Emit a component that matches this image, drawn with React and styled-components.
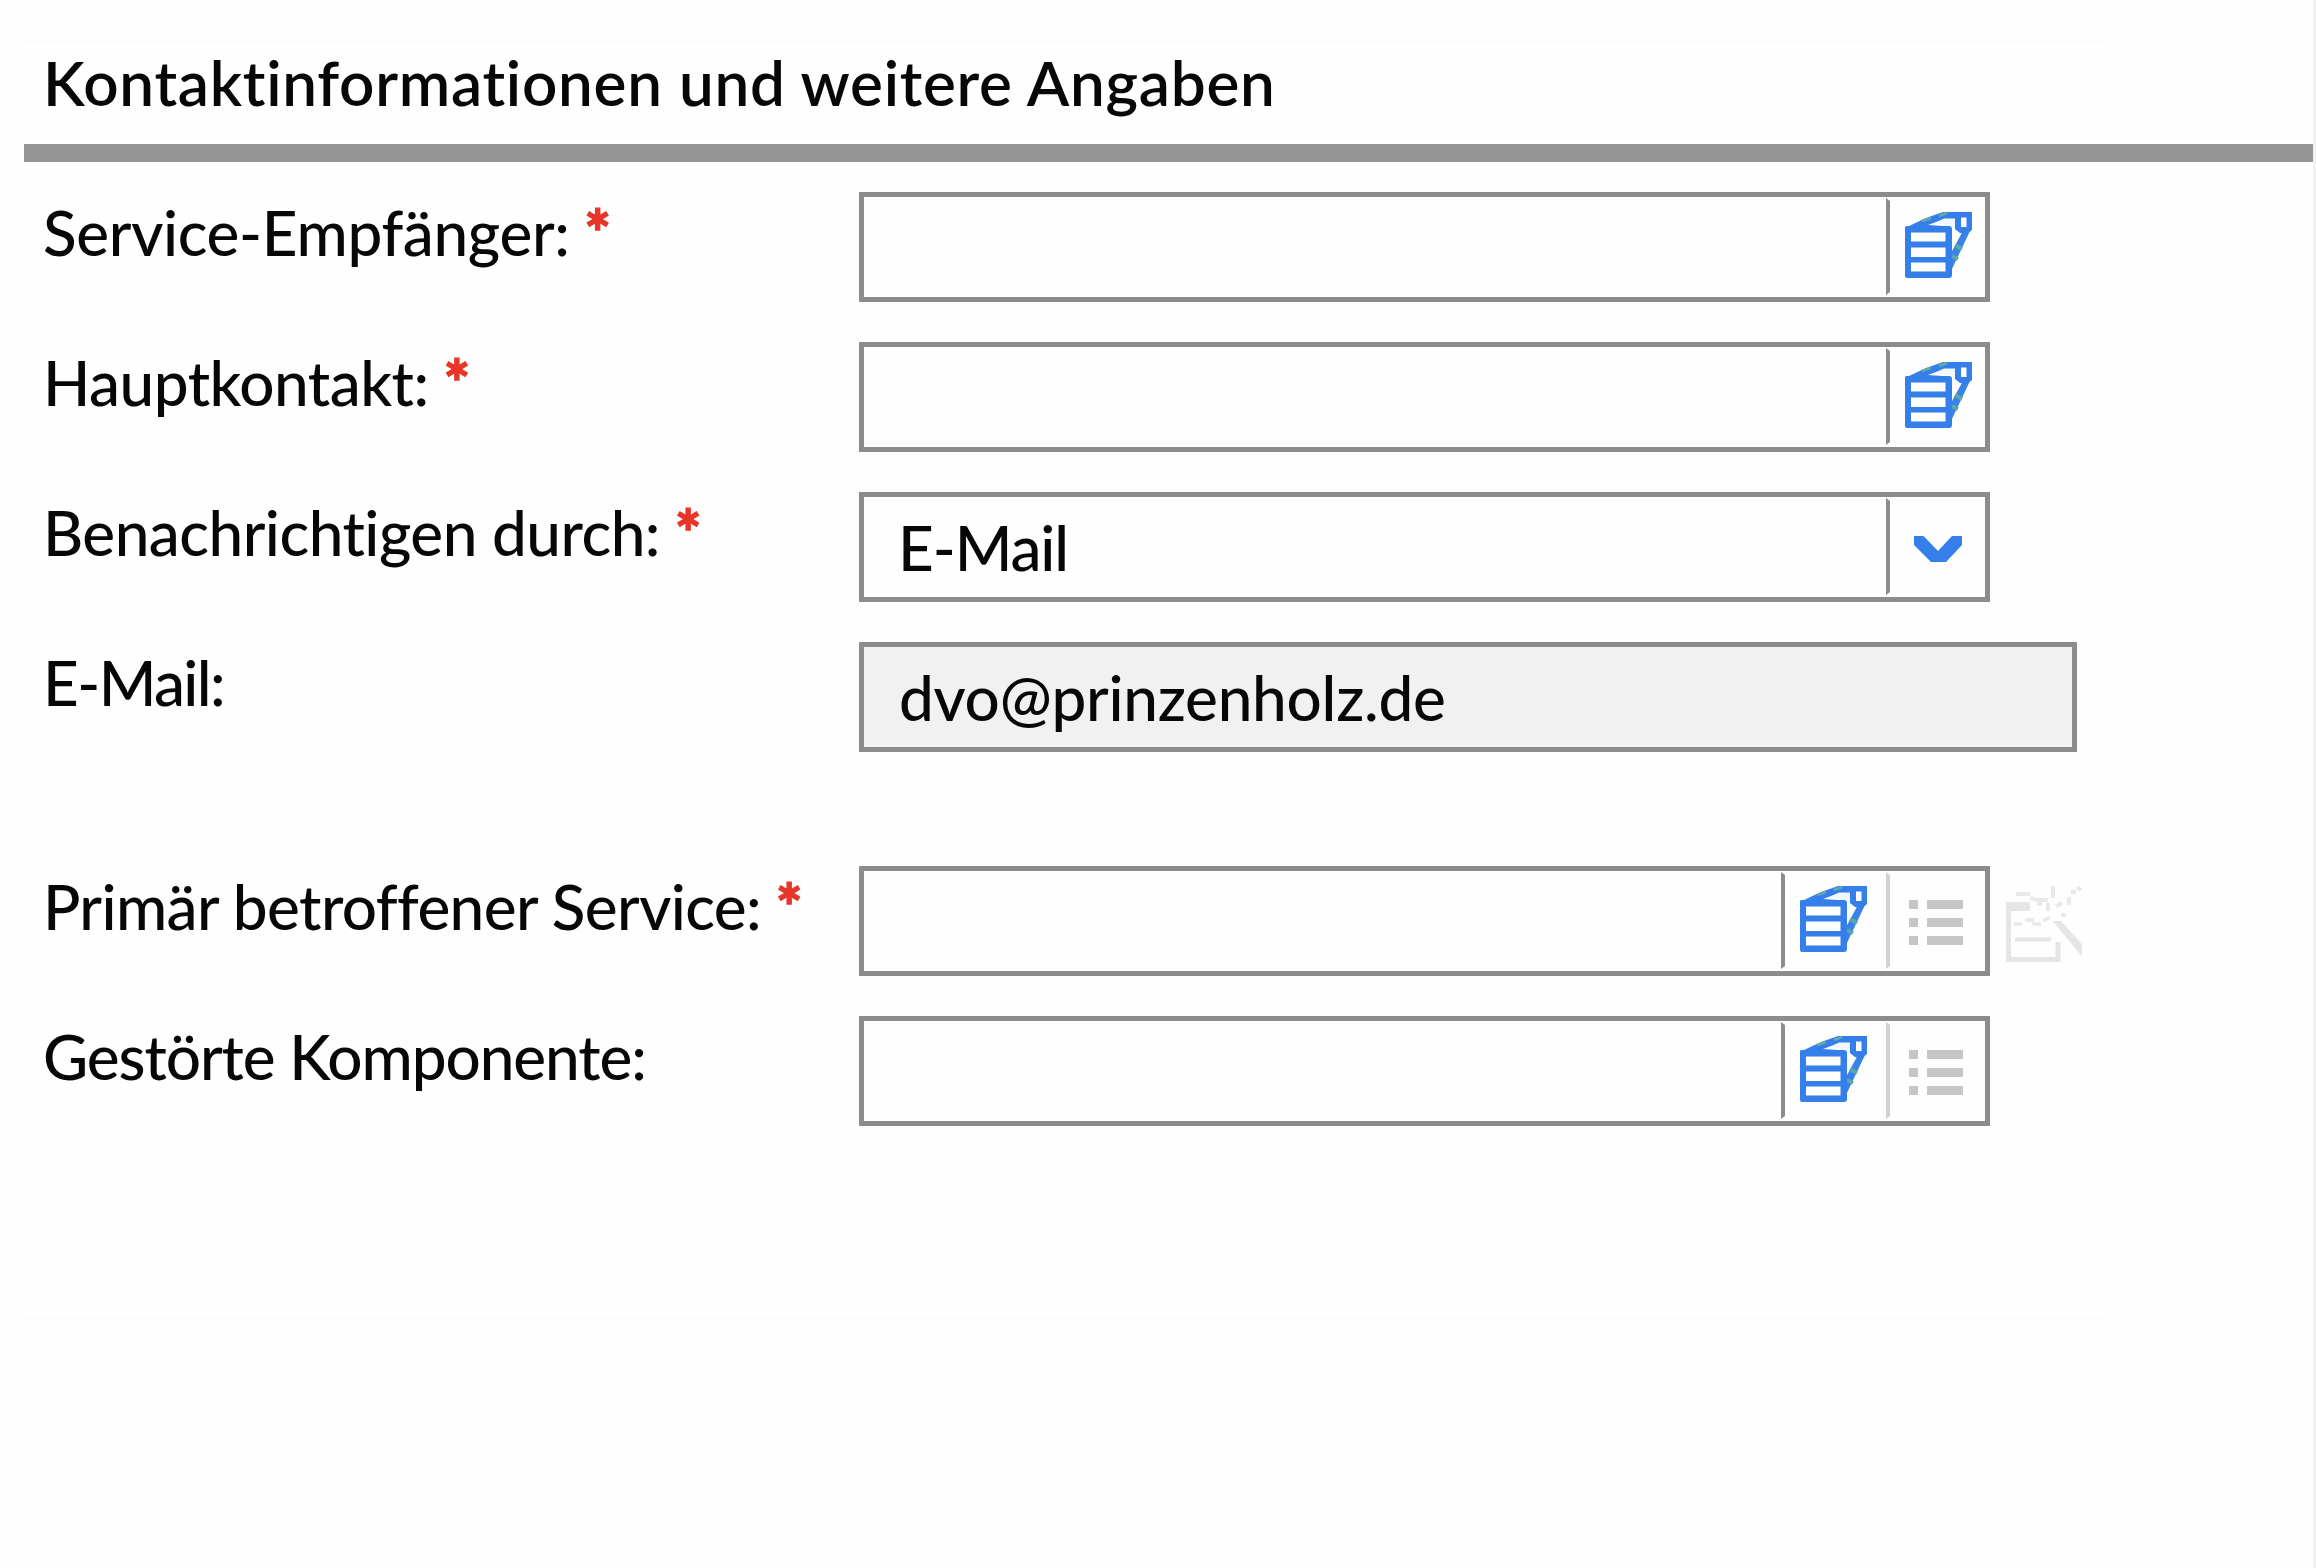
import React from 'react';
import styled, { createGlobalStyle } from 'styled-components';

const GlobalStyle = createGlobalStyle`
  *, *::before, *::after { box-sizing: border-box; }
  body {
    margin: 0;
    background: #fefefe;
    color: #060808;
    font-family: Lato, "Open Sans", sans-serif;
  }
`;

const Page = styled.main`
  width: 2316px;
  height: 1568px;
  padding: 41px 0 0 24px;
  border-right: 3px solid #f1f1f1;
  overflow: hidden;
`;

const Panel = styled.section`
  display: flex;
  flex-direction: column;
  width: 2080px;
  height: 1278px;
  border: 2px solid #fbfbfb;
  border-left: 0;
  border-right: 1px solid #fcfcfc;
`;

const Title = styled.h1`
  flex: none;
  height: 101px;
  margin: 0;
  padding: 2px 0 0 19px;
  font-size: 62px;
  font-weight: 600;
  line-height: 74px;
  letter-spacing: 0.73px;
  white-space: nowrap;
`;

const Rule = styled.div`
  flex: none;
  width: 2289px;
  height: 18px;
  background: #959595;
`;

const Form = styled.form`
  display: flex;
  flex-direction: column;
  gap: 40px;
  padding-top: 30px;
`;

const Row = styled.div`
  display: grid;
  grid-template-columns: 835px auto auto 1fr;
  height: 110px;
  margin-top: ${(p) => (p.$spaced ? '74px' : '0')};
`;

const Label = styled.label`
  padding: 3px 0 0 19px;
  font-size: 62px;
  font-weight: 500;
  line-height: 74px;
  letter-spacing: ${(p) => p.$tracking}px;
  white-space: nowrap;
`;

const Required = styled.span`
  margin-left: 15px;
  color: #e8352a;
  font-weight: 900;
  -webkit-text-stroke: 1.4px #e8352a;
`;

const Field = styled.div`
  display: flex;
  width: ${(p) => (p.$readOnly ? '1218px' : '1131px')};
  height: 110px;
  border: 5px solid #8c8c8c;
  background: ${(p) => (p.$readOnly ? '#f1f1f1' : '#fefefe')};
`;

const Value = styled.span`
  flex: 1;
  padding: 13px 0 0 ${(p) => p.$indent}px;
  font-size: 62px;
  font-weight: 500;
  line-height: 74px;
  letter-spacing: ${(p) => p.$tracking}px;
  white-space: nowrap;
`;

const Tool = styled.span`
  display: flex;
  align-items: flex-start;
  width: ${(p) => (p.$wide ? '105px' : '99px')};
  height: 97px;
  margin-top: 1px;
  border: solid transparent;
  border-width: 3px 0 3px 4px;
  border-left-color: ${(p) => (p.$muted ? '#d2d2d2' : '#8c8c8c')};

  svg { display: block; margin: 10px 0 0 15px; }
`;

const SideAction = styled.span`
  padding: 19px 0 0 16px;
  svg { display: block; }
`;

const RecordsIcon = () => (
  <svg width="68" height="68" viewBox="0 0 68 68" fill="none">
    <path d="M46 60L65 20L59 18L46 42Z" fill="#3982e8" />
    <path d="M50 34l7 4M47 45l6 3" stroke="#5aa8a8" strokeWidth="4" />
    <path d="M4 15L21 7L38 1H67V19L62 23L55 22L50 18V8H39L23 14L45 15.5" fill="#347fe9" />
    <path d="M17 10l9-3M34 5l8-3" stroke="#62aaa7" strokeWidth="2.5" />
    <path d="M30 12L39 7.500H50V17L46 15Z" fill="#f1f7fd" />
    <path d="M56 6.500H61.500V16H56Z" fill="#fefefe" />
    <path
      fillRule="evenodd"
      d="M0 16Q0 15 2 15H44Q47 15 47 18V64Q47 67 44 67H2Q0 67 0 65ZM6 21.500V30.500H40.500V21.500ZM6 36.500V46H40.500V36.500ZM6 51.500V60.500H40.500V51.500Z"
      fill="#347fe9"
    />
  </svg>
);

const ChevronIcon = () => (
  <svg width="68" height="68" viewBox="0 0 68 68">
    <path d="M9 25H18.500L33 40L47 25H57V34L41 51H26L9 34Z" fill="#347fe9" />
  </svg>
);

const ListIcon = () => (
  <svg width="68" height="68" viewBox="0 0 68 68" fill="#c6c6c6">
    <path d="M4 15h9v9H4zM22 15h36v9H22zM4 33h9v9H4zM22 33h36v9H22zM4 51h9v9H4zM22 51h36v9H22z" />
  </svg>
);

const MagicFormIcon = () => (
  <svg width="80" height="80" viewBox="0 0 80 80" fill="none" stroke="#e5e5e5">
    <path d="M2.500 17V74.500H52V57" strokeWidth="5" />
    <path d="M0 21.500H24" strokeWidth="9" />
    <path d="M9 54.500H45" strokeWidth="4" />
    <path d="M8 39H16M19 35H28M26 39H35M37 36L44 32" stroke="#e9e9e9" strokeWidth="3.5" />
    <path d="M10 9H24M24 13L31 15H42M42 18V26M31 19H36" stroke="#e9e9e9" strokeWidth="4" />
    <path d="M47 1V13M50 21L56 18M63 12V20M55 30H60M65 7H70M71 2L75 5" stroke="#e9e9e9" strokeWidth="4" />
    <path d="M51 38L74 66L74 60L54 38Z" fill="#e5e5e5" strokeWidth="4" />
  </svg>
);

const fields = [
  { id: 'recipient', label: 'Service-Empfänger:', tracking: -0.32, required: true, tools: ['records'] },
  { id: 'contact', label: 'Hauptkontakt:', tracking: -0.5, required: true, tools: ['records'] },
  {
    id: 'notify', label: 'Benachrichtigen durch:', tracking: -0.5, required: true,
    value: 'E-Mail', valueTracking: -1.1, indent: 34, tools: ['chevron'],
  },
  {
    id: 'mail', label: 'E-Mail:', tracking: -1.6, readOnly: true,
    value: 'dvo@prinzenholz.de', valueTracking: -0.25, indent: 35, tools: [],
  },
  {
    id: 'service', label: 'Primär betroffener Service:', tracking: -0.6, required: true,
    spaced: true, tools: ['records', 'list'], wizard: true,
  },
  { id: 'component', label: 'Gestörte Komponente:', tracking: -1.05, tools: ['records', 'list'] },
];

const icons = { records: RecordsIcon, chevron: ChevronIcon, list: ListIcon };

export default function App() {
  return (
    <>
      <GlobalStyle />
      <Page>
        <Panel>
          <Title>Kontaktinformationen und weitere Angaben</Title>
          <Rule />
          <Form>
            {fields.map((f) => (
              <Row key={f.id} $spaced={f.spaced}>
                <Label $tracking={f.tracking}>
                  {f.label}
                  {f.required && <Required>*</Required>}
                </Label>
                <Field $readOnly={f.readOnly}>
                  <Value $tracking={f.valueTracking || 0} $indent={f.indent || 0}>{f.value}</Value>
                  {f.tools.map((name, i) => {
                    const Icon = icons[name];
                    return (
                      <Tool key={name} $wide={i < f.tools.length - 1} $muted={name === 'list'}>
                        <Icon />
                      </Tool>
                    );
                  })}
                </Field>
                {f.wizard && <SideAction><MagicFormIcon /></SideAction>}
              </Row>
            ))}
          </Form>
        </Panel>
      </Page>
    </>
  );
}
